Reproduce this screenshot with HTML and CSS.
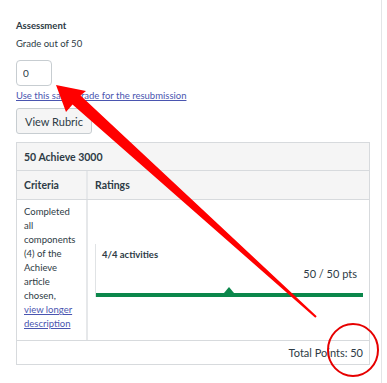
FILE: index.html
```html
<!DOCTYPE html>
<html>
<head>
    <meta name='viewport' content='width=device-width, initial-scale=1'>
    <title>Assessment</title>
    <link rel="stylesheet" href="styles.css">
</head>
<body>
    <div class="page">
        <h4 class="title">Assessment</h4>
        <p class="grade-label">Grade out of 50</p>
        <input class="grade-input" type="text" value="0">
        <a class="link resub" href="#">Use this same grade for the resubmission</a>
        <button class="btn">View Rubric</button>

        <div class="rubric">
            <div class="rubric-title">50 Achieve 3000</div>
            <div class="row head">
                <div class="col-criteria">Criteria</div>
                <div class="col-ratings">Ratings</div>
            </div>
            <div class="row body">
                <div class="col-criteria desc">
                    Completed all components (4) of the Achieve article chosen,
                    <a class="link more" href="#">view longer description</a>
                </div>
                <div class="col-ratings">
                    <div class="rating">
                        <div class="rating-name">4/4 activities</div>
                        <div class="rating-pts">50 / 50 pts</div>
                        <div class="rating-bar"><span class="marker"></span></div>
                    </div>
                </div>
            </div>
            <div class="total">Total Points: 50</div>
        </div>
    </div>

    <svg class="markup" width="387" height="383" viewBox="0 0 387 383">
        <polygon fill="#ff0000" points="56,85 86,91 80.5,95.6 316.7,316.3 315.3,317.7 72.5,104.4 66,112"/>
        <ellipse cx="353" cy="350" rx="25" ry="26" fill="none" stroke="#e60000" stroke-width="2"/>
    </svg>
</body>
</html>
```

FILE: styles.css
```css
* {
    box-sizing: border-box;
    margin: 0;
    padding: 0;
}

body {
    font-family: 'Lato', 'Liberation Sans', sans-serif;
    font-size: 9.5px;
    color: #2d3b45;
    background: #fff;
    line-height: 14px;
}

.page {
    width: 382px;
    min-height: 383px;
    border-right: 1px solid #e3e5e7;
    padding: 18px 0 0 16px;
}

.title {
    font-size: 9.5px;
    font-weight: 700;
    line-height: 16px;
}

.grade-label {
    margin-top: 2px;
    font-size: 9.5px;
    line-height: 16px;
}

.grade-input {
    display: block;
    width: 36px;
    height: 26px;
    margin-top: 8px;
    padding: 0 6px;
    border: 1px solid #c7cdd1;
    border-radius: 4px;
    font-family: inherit;
    font-size: 10px;
    color: #2d3b45;
}

.link {
    color: #4a55b0;
    text-decoration: underline;
}

.resub {
    display: block;
    margin-top: 3px;
    font-size: 9.5px;
}

.more {
    display: block;
}

.btn {
    display: block;
    margin-top: 5px;
    width: 76px;
    height: 26px;
    padding: 0;
    background: #f5f5f5;
    border: 1px solid #c7cdd1;
    border-radius: 3px;
    font-family: inherit;
    font-size: 11px;
    color: #2d3b45;
}

.rubric {
    width: 354px;
    margin-top: 8px;
    border: 1px solid #d7dadd;
}

.rubric-title {
    height: 28px;
    padding: 0 7px;
    display: flex;
    align-items: center;
    background: #f5f5f5;
    border-bottom: 1px solid #d7dadd;
    font-size: 10.5px;
    font-weight: 700;
}

.row {
    display: flex;
}

.row.head {
    height: 29px;
    background: #f5f5f5;
    border-bottom: 1px solid #d7dadd;
    font-size: 10.5px;
    font-weight: 700;
}

.row.head > div {
    display: flex;
    align-items: center;
}

.col-criteria {
    width: 71px;
    padding: 0 7px;
    border-right: 2px solid #e6e8ea;
}

.col-ratings {
    flex: 1;
    padding: 0 6px 0 7px;
}

.row.body {
    height: 141px;
    border-bottom: 1px solid #d7dadd;
}

.desc {
    padding-top: 5px;
}

.row.body .col-ratings {
    display: flex;
    align-items: center;
}

.rating {
    flex: 1;
    height: 53px;
    border-left: 1px solid #e0e3e5;
    display: flex;
    flex-direction: column;
}

.rating-name {
    font-size: 9.5px;
    font-weight: 700;
    padding: 4px 0 0 6px;
}

.rating-pts {
    font-size: 11px;
    text-align: right;
    padding-right: 6px;
    margin-top: 5px;
}

.rating-bar {
    margin-top: auto;
    height: 4px;
    background: #0b874b;
    position: relative;
}

.marker {
    position: absolute;
    left: 128px;
    top: -6px;
    width: 0;
    height: 0;
    border-left: 5px solid transparent;
    border-right: 5px solid transparent;
    border-bottom: 6px solid #0b874b;
}

.total {
    height: 23px;
    padding-right: 6px;
    display: flex;
    align-items: center;
    justify-content: flex-end;
    font-size: 11px;
}

.markup {
    position: absolute;
    left: 0;
    top: 0;
    pointer-events: none;
}
```
